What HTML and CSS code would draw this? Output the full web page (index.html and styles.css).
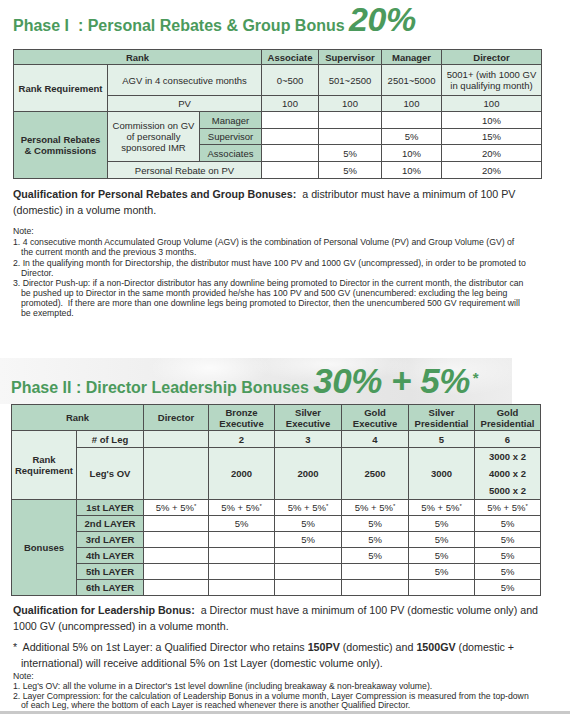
FILE: index.html
```html
<!DOCTYPE html>
<html lang="en">
<head>
  <meta charset="UTF-8" />
  <meta name="viewport" content="width=device-width, initial-scale=1.0" />
  <title>Phase I &amp; II Bonuses</title>
  <link rel="stylesheet" href="styles.css">
</head>
<body>
  <div class="page">
    <h2 class="phase phase-one">Phase I&nbsp; : Personal Rebates &amp; Group Bonus <span class="pct">20%</span></h2>

    <table class="grid grid-one">
      <colgroup>
        <col style="width:94px"><col style="width:92px"><col style="width:62px">
        <col style="width:57px"><col style="width:63px"><col style="width:60px"><col style="width:100px">
      </colgroup>
      <tr class="r-head">
        <th class="hd" colspan="3">Rank</th>
        <th class="hd">Associate</th>
        <th class="hd">Supervisor</th>
        <th class="hd">Manager</th>
        <th class="hd">Director</th>
      </tr>
      <tr class="r-agv">
        <th class="lt" rowspan="2">Rank Requirement</th>
        <td class="lt" colspan="2">AGV in 4 consecutive months</td>
        <td class="lt">0~500</td>
        <td class="lt">501~2500</td>
        <td class="lt">2501~5000</td>
        <td class="lt">5001+ (with 1000 GV<br>in qualifying month)</td>
      </tr>
      <tr class="r-pv">
        <td class="lt" colspan="2">PV</td>
        <td class="lt">100</td><td class="lt">100</td><td class="lt">100</td><td class="lt">100</td>
      </tr>
      <tr class="r-mgr">
        <th class="hd" rowspan="4">Personal Rebates<br>&amp; Commissions</th>
        <td class="lt" rowspan="3">Commission on GV<br>of personally<br>sponsored IMR</td>
        <td class="hd">Manager</td>
        <td></td><td></td><td></td><td>10%</td>
      </tr>
      <tr class="r-sup">
        <td class="hd">Supervisor</td>
        <td></td><td></td><td>5%</td><td>15%</td>
      </tr>
      <tr class="r-ass">
        <td class="hd">Associates</td>
        <td></td><td>5%</td><td>10%</td><td>20%</td>
      </tr>
      <tr class="r-pr">
        <td class="lt" colspan="2">Personal Rebate on PV</td>
        <td></td><td>5%</td><td>10%</td><td>20%</td>
      </tr>
    </table>

    <p class="qual"><b>Qualification for Personal Rebates and Group Bonuses:</b>&nbsp; a distributor must have a minimum of 100 PV (domestic) in a volume month.</p>

    <div class="notes notes-one">
      <div class="note-title">Note:</div>
      <div class="note">1. 4 consecutive month Accumulated Group Volume (AGV) is the combination of Personal Volume (PV) and Group Volume (GV) of<br>the current month and the previous 3 months.</div>
      <div class="note">2. In the qualifying month for Directorship, the distributor must have 100 PV and 1000 GV (uncompressed), in order to be promoted to<br>Director.</div>
      <div class="note">3. Director Push-up: if a non-Director distributor has any downline being promoted to Director in the current month, the distributor can<br>be pushed up to Director in the same month provided he/she has 100 PV and 500 GV (unencumbered: excluding the leg being<br>promoted).&nbsp; If there are more than one downline legs being promoted to Director, then the unencumbered 500 GV requirement will<br>be exempted.</div>
    </div>

    <h2 class="phase phase-two">Phase II : Director Leadership Bonuses <span class="pct">30% + 5%</span><span class="star">*</span></h2>

    <table class="grid grid-two">
      <colgroup>
        <col style="width:65px"><col style="width:67px"><col style="width:65px"><col style="width:66px">
        <col style="width:67px"><col style="width:67px"><col style="width:66px"><col style="width:66px">
      </colgroup>
      <tr class="r-head2">
        <th class="hd" colspan="2">Rank</th>
        <th class="hd">Director</th>
        <th class="hd">Bronze<br>Executive</th>
        <th class="hd">Silver<br>Executive</th>
        <th class="hd">Gold<br>Executive</th>
        <th class="hd">Silver<br>Presidential</th>
        <th class="hd">Gold<br>Presidential</th>
      </tr>
      <tr class="r-leg">
        <th class="lt" rowspan="2">Rank<br>Requirement</th>
        <th class="lt"># of Leg</th>
        <th class="lt"></th><th class="lt">2</th><th class="lt">3</th><th class="lt">4</th><th class="lt">5</th><th class="lt">6</th>
      </tr>
      <tr class="r-ov">
        <th class="lt">Leg's OV</th>
        <th class="lt"></th><th class="lt">2000</th><th class="lt">2000</th><th class="lt">2500</th><th class="lt">3000</th>
        <th class="lt stack">3000 x 2<br>4000 x 2<br>5000 x 2</th>
      </tr>
      <tr>
        <th class="hd" rowspan="6">Bonuses</th>
        <th class="hd">1st LAYER</th>
        <td>5% + 5%<sup>*</sup></td><td>5% + 5%<sup>*</sup></td><td>5% + 5%<sup>*</sup></td><td>5% + 5%<sup>*</sup></td><td>5% + 5%<sup>*</sup></td><td>5% + 5%<sup>*</sup></td>
      </tr>
      <tr>
        <th class="hd">2nd LAYER</th>
        <td></td><td>5%</td><td>5%</td><td>5%</td><td>5%</td><td>5%</td>
      </tr>
      <tr>
        <th class="hd">3rd LAYER</th>
        <td></td><td></td><td>5%</td><td>5%</td><td>5%</td><td>5%</td>
      </tr>
      <tr>
        <th class="hd">4th LAYER</th>
        <td></td><td></td><td></td><td>5%</td><td>5%</td><td>5%</td>
      </tr>
      <tr>
        <th class="hd">5th LAYER</th>
        <td></td><td></td><td></td><td></td><td>5%</td><td>5%</td>
      </tr>
      <tr>
        <th class="hd">6th LAYER</th>
        <td></td><td></td><td></td><td></td><td></td><td>5%</td>
      </tr>
    </table>

    <p class="qual qual-two"><b>Qualification for Leadership Bonus:</b>&nbsp; a Director must have a minimum of 100 PV (domestic volume only) and 1000 GV (uncompressed) in a volume month.</p>
    <p class="qual extra">*&nbsp; Additional 5% on 1st Layer: a Qualified Director who retains <b>150PV</b> (domestic) and <b>1500GV</b> (domestic + international) will receive additional 5% on 1st Layer (domestic volume only).</p>

    <div class="notes notes-two">
      <div class="note-title">Note:</div>
      <div class="note">1. Leg's OV: all the volume in a Director's 1st level downline (including breakaway &amp; non-breakaway volume).</div>
      <div class="note">2. Layer Compression: for the calculation of Leadership Bonus in a volume month, Layer Compression is measured from the top-down<br>of each Leg, where the bottom of each Layer is reached whenever there is another Qualified Director.</div>
    </div>
  </div>
  <div class="footer-bar"></div>
</body>
</html>
```

FILE: styles.css
```css
:root {
  --title-green: #4b9a5c;
  --head-bg: #b6d7c4;
  --light-bg: #e3f0e8;
  --line: #4f4f4f;
  --text: #2b2b2b;
}
* { box-sizing: border-box; margin: 0; padding: 0; }
body { font-family: "Liberation Sans", Arial, sans-serif; color: var(--text); background: #fff; width: 570px; height: 714px; overflow: hidden; position: relative; }
.page { padding: 0 0 0 13px; }

.phase { color: var(--title-green); font-weight: bold; font-size: 16px; line-height: 20px; white-space: nowrap; }
.phase .pct { font-size: 34px; line-height: 20px; font-style: italic; letter-spacing: -0.5px; }
.phase-one { height: 49px; padding-top: 9px; }
.phase-two {
  margin: 0 0 0 -13px; padding: 13px 0 0 11px; width: 512px; height: 46px;
  background:
    radial-gradient(ellipse 60px 22px at 210px 10px, rgba(255,255,255,0.8), transparent),
    radial-gradient(ellipse 80px 18px at 330px 6px, rgba(255,255,255,0.7), transparent),
    radial-gradient(ellipse 70px 26px at 455px 12px, rgba(255,255,255,0.6), transparent),
    linear-gradient(90deg, #f7f7f7 0%, #ececec 45%, #e4e4e4 80%, #ededed 100%);
}
.phase-two .pct { font-size: 35px; }
.phase-two .star { font-size: 15px; line-height: 14px; vertical-align: top; margin-left: 3px; }

.grid { border-collapse: collapse; table-layout: fixed; font-size: 9.5px; text-align: center; }
.grid th, .grid td { border: 1px solid var(--line); padding: 0 2px; line-height: 11px; }
.grid th { font-weight: bold; }
.grid td { font-weight: normal; }
.grid .hd { background: var(--head-bg); }
.grid .lt { background: var(--light-bg); }
.grid sup { font-size: 6px; vertical-align: 3px; line-height: 0; }

.grid-one { width: 528px; }
.r-head th { height: 15px; }
.r-agv td, .r-agv th { height: 31px; }
.r-pv td { height: 16px; }
.r-mgr td, .r-ass td, .r-pr td { height: 17px; }
.r-sup td { height: 16px; }

.grid-two { width: 529px; margin-left: -2px; }
.grid-two tr th, .grid-two tr td { height: 16px; }
.grid-two .r-head2 th { height: 26px; }
.grid-two .r-leg th { height: 17px; }
.grid-two .r-ov th { height: 51px; }
.stack { line-height: 17px !important; }

.qual { font-size: 10.7px; line-height: 16px; margin-top: 7px; width: 532px; }
.qual-two { margin-top: 6px; }
.extra { margin-top: 5px; padding-left: 8px; text-indent: -8px; width: 520px; }

.notes { font-size: 8.7px; line-height: 10px; width: 556px; }
.notes-one { margin-top: 8px; height: 132px; }
.notes-two { margin-top: 1px; line-height: 9px; }
.note-title { margin-bottom: 1px; }
.note { padding-left: 8px; text-indent: -8px; margin-bottom: 0.5px; }

.footer-bar { position: absolute; left: 0; bottom: 0; width: 570px; height: 3px; background: #c9c9c9; }
```
